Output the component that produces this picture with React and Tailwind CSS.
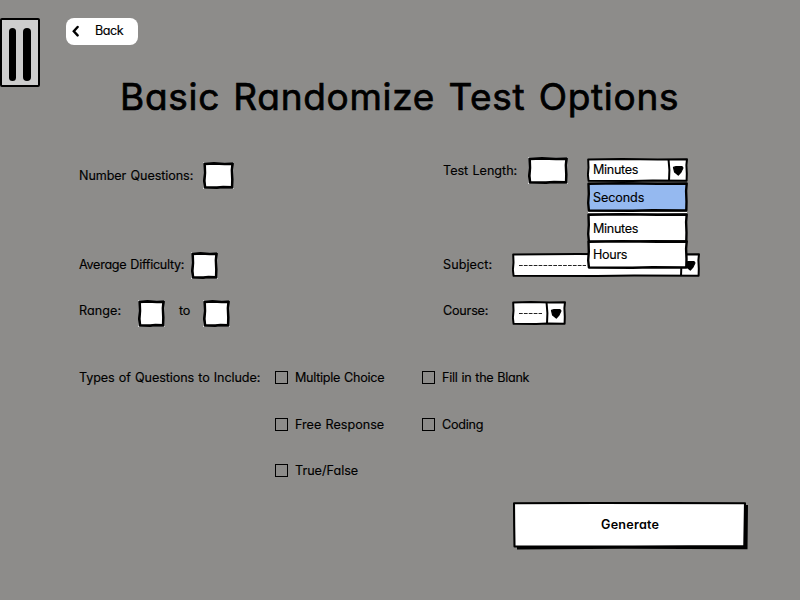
import { useLayoutEffect, useRef } from "react";

// Text that spreads its letters evenly over a given width.
function Label({ children, width, className = "text-[12.6px] leading-4 [-webkit-text-stroke:0.15px_black]" }) {
  const ref = useRef(null);
  useLayoutEffect(() => {
    const el = ref.current;
    el.style.letterSpacing = "0px";
    const natural = el.getBoundingClientRect().width;
    el.style.letterSpacing = (width - 0.8 - natural) / children.length + "px";
  }, [children, width]);
  return (
    <span className="flex shrink-0" style={{ width }}>
      <span ref={ref} className={"block shrink-0 whitespace-nowrap [word-spacing:0.06em] " + className}>{children}</span>
    </span>
  );
}

// Sketched rectangle with slightly wavy edges; `inset` is the distance of the stroke's centre from the box.
function Sketch({ w, h, fill = "#fff", stroke = 2.5, inset = 1.8, corners = false, children }) {
  const a = inset;
  const d = `M${a} ${a + 0.3} L${w * 0.35} ${a - 0.2} L${w * 0.7} ${a + 0.3} L${w - a + 0.2} ${a} L${w - a - 0.4} ${h * 0.3} L${w - a} ${h * 0.65} L${w - a - 0.2} ${h - a} L${w * 0.65} ${h - a - 0.3} L${w * 0.45} ${h - a + 0.2} L${a + 0.4} ${h - a} L${a - 0.3} ${h * 0.7} L${a + 0.3} ${h * 0.4} Z`;
  return (
    <svg width={w} height={h} className="absolute inset-0">
      {corners && <rect width={w} height={h} fill="#e4e4e4" />}
      <path d={d} fill={fill} stroke="#000" strokeWidth={stroke} strokeLinejoin="round" />
      {children}
    </svg>
  );
}

function Field({ w = 27, h = 27, className = "" }) {
  return (
    <div className={"relative shrink-0 " + className} style={{ width: w, height: h }}>
      <Sketch w={w} h={h} corners stroke={2.7} inset={1.6} />
    </div>
  );
}

function Select({ w, h = 24, arrow = 19, children }) {
  const x = w - arrow;
  const c = w - 10;
  return (
    <div className="relative shrink-0" style={{ width: w, height: h }}>
      <Sketch w={w} h={h} stroke={2} inset={1.2}>
        <path d={`M${x - 0.5} 1 L${x + 0.4} ${h / 2} L${x} ${h - 1}`} fill="none" stroke="#000" strokeWidth="2" />
        <path d={`M${c - 4.5} 9.4 L${c - 2} 8.7 L${c + 4} 8.7 L${c + 4.9} 9.9 L${c + 3} 14 L${c + 0.3} 17 L${c - 3.4} 14 Z`} stroke="#000" strokeWidth="1.2" strokeLinejoin="round" />
      </Sketch>
      <div className="relative flex h-full items-center pl-1.5">{children}</div>
    </div>
  );
}

function Dashes({ width }) {
  return (
    <svg width={width} height="3" className="ml-px">
      <path d={`M0 1.5 H${width}`} stroke="#222" strokeWidth="1.2" strokeDasharray="3.7 1.2" />
    </svg>
  );
}

function Check({ text, width }) {
  return (
    <label className="flex h-[13px] items-center gap-[7px]">
      <span className="size-[13px] border border-black" />
      <Label width={width}>{text}</Label>
    </label>
  );
}

function Option({ text, width, h, fill }) {
  return (
    <div className="relative flex w-[101px] items-center pl-1.5 pt-px" style={{ height: h }}>
      <Sketch w={101} h={h} fill={fill} stroke={2.4} inset={1.5} />
      <div className="relative"><Label width={width}>{text}</Label></div>
    </div>
  );
}

export default function App() {
  return (
    <div className="h-[600px] w-[800px] overflow-hidden bg-[#8d8c8a] text-black [font-family:Inter,'Noto_Sans',sans-serif] [font-feature-settings:'cv11']">
      <header className="flex h-[76px] items-start pt-[18px]">
        <div className="flex h-[69px] w-10 items-center justify-center gap-[7px] rounded-[2px] border-2 border-black bg-[#cdcdcd] pr-px pt-[3px]">
          <i className="h-[53px] w-[7.5px] rounded-full bg-black" />
          <i className="h-[53px] w-[7.5px] rounded-full bg-black" />
        </div>
        <button className="ml-[26px] flex h-[27px] w-[72px] items-center rounded-[8px] bg-white pb-0.5 pl-1.5">
          <svg width="7" height="12" viewBox="0 0 7 12" className="mr-4">
            <path d="M5.6 2 L1.8 6.2 L5.6 10.4" fill="none" stroke="#000" strokeWidth="2.4" strokeLinecap="round" />
          </svg>
          <Label width={29}>Back</Label>
        </button>
      </header>

      <h1 className="flex h-[79px] pl-[120px]">
        <Label width={560} className="text-[37px] leading-[42px] [-webkit-text-stroke:0.7px_black] [stroke-linejoin:round]">Basic Randomize Test Options</Label>
      </h1>

      <main className="grid grid-cols-[364px_1fr] pl-[79px]">
        <section>
          <div className="flex h-[97px] items-start pt-[7px]">
            <div className="mt-[6px]"><Label width={115}>Number Questions:</Label></div>
            <Field w={31} className="ml-[9px]" />
          </div>
          <div className="flex h-[48px]">
            <div className="mt-[5px]"><Label width={106}>Average Difficulty:</Label></div>
            <Field className="ml-[6px]" />
          </div>
          <div className="flex h-[71px]">
            <div className="mt-[3px]"><Label width={43}>Range:</Label></div>
            <Field className="ml-4" />
            <div className="ml-[14px] mt-[3px]"><Label width={12}>to</Label></div>
            <Field className="ml-[12px]" />
          </div>
        </section>

        <section>
          <div className="flex h-[98px] pt-[2px]">
            <div className="mt-[6px]"><Label width={75}>Test Length:</Label></div>
            <Field w={40} className="ml-[10px]" />
            <div className="relative z-10 ml-[19px] mt-[1px]">
              <Select w={101}><div className="pb-px"><Label width={46}>Minutes</Label></div></Select>
              <div className="absolute left-0 top-6 w-[101px]">
                <Option text="Seconds" width={52} h={30} fill="#95b9f0" />
                <div className="mx-px h-px bg-white" />
                <Option text="Minutes" width={46} h={30} fill="#fff" />
                <div className="-mt-[3px]"><Option text="Hours" width={35} h={29} fill="#fff" /></div>
              </div>
            </div>
          </div>
          <div className="flex h-[48px]">
            <div className="mt-1 w-[69px]"><Label width={50}>Subject:</Label></div>
            <Select w={188}><Dashes width={67} /></Select>
          </div>
          <div className="flex h-[69px]">
            <div className="mt-[2px] w-[69px]"><Label width={46}>Course:</Label></div>
            <Select w={54}><Dashes width={23} /></Select>
          </div>
        </section>
      </main>

      <section className="grid h-[131px] grid-cols-[196px_147px_1fr] pl-[79px]">
        <div className="-mt-px"><Label width={182}>Types of Questions to Include:</Label></div>
        <div className="flex flex-col gap-[34px]">
          <Check text="Multiple Choice" width={90} />
          <Check text="Free Response" width={90} />
          <div className="-mt-px"><Check text="True/False" width={64} /></div>
        </div>
        <div className="flex flex-col gap-[34px]">
          <Check text="Fill in the Blank" width={88} />
          <Check text="Coding" width={42} />
        </div>
      </section>

      <button className="relative ml-[513px] flex h-[48px] w-[235px] items-center justify-center pb-0.5">
        <svg width="235" height="48" className="absolute inset-0">
          <path d="M4 3 H235 L234.5 47.3 L110 46.8 L4 47.5 Z" />
          <path d="M1 1.3 L85 .9 L232 1.2 L231.3 44 L120 44.5 L1.5 44.5 L1.2 24 Z" fill="#fff" stroke="#000" strokeWidth="2.1" strokeLinejoin="round" />
        </svg>
        <div className="relative"><Label width={59} className="text-[12.6px] font-semibold leading-4">Generate</Label></div>
      </button>
    </div>
  );
}
